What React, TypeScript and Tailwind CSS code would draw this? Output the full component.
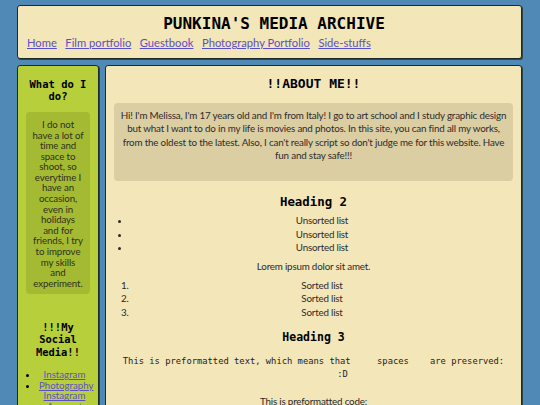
import React from "react";

const mono = "font-['DejaVu_Sans_Mono',monospace]";
const sans = "font-['Lato',sans-serif]";

const navLinks = [
  "Home",
  "Film portfolio",
  "Guestbook",
  "Photography Portfolio",
  "Side-stuffs",
];

const whatIDo = [
  "I do not",
  "have a lot of",
  "time and",
  "space to",
  "shoot, so",
  "everytime I",
  "have an",
  "occasion,",
  "even in",
  "holidays",
  "and for",
  "friends, I try",
  "to improve",
  "my skills",
  "and",
  "experiment.",
].join("\n");

function Header() {
  return (
    <header className="h-[54px] rounded-[3px] border border-[#1c2a2a] bg-[#f3e6b9] pl-[9px] pt-[8px] shadow-[1px_1px_0_#2f4444]">
      <h1 className={`${mono} text-center text-[16px] font-bold leading-[20px] text-black`}>
        PUNKINA'S MEDIA ARCHIVE
      </h1>
      <nav className={`${sans} mt-[2px] flex gap-[8.5px] text-[11.2px] leading-[14px]`}>
        {navLinks.map((l) => (
          <a key={l} href="#" className="text-[#5b4fc8] underline">
            {l}
          </a>
        ))}
      </nav>
    </header>
  );
}

function Sidebar() {
  return (
    <aside className="w-[82px] shrink-0 rounded-[3px] border border-[#1c2a2a] bg-[#b7cf3a] px-[8px] pt-[13px] pb-4 shadow-[1px_1px_0_#2f4444]">
      <h2 className={`${mono} text-center text-[10.5px] font-bold leading-[11.7px] text-black`}>
        What do I do?
      </h2>
      <p className={`${sans} mt-[9.5px] whitespace-pre-line rounded-[4px] bg-[#a4ba33] px-[4px] pt-[7px] pb-[6px] text-center text-[9.7px] leading-[10.6px] tracking-[-0.1px] text-[#2d321a]`}>
        {whatIDo}
      </p>
      <h2 className={`${mono} mt-[26.5px] text-center text-[10.4px] font-bold leading-[12.5px] text-black`}>
        !!!My Social Media!!
      </h2>
      <ul className={`${sans} mt-[10.5px] list-disc pl-[13px] text-center text-[9.7px] leading-[10.7px]`}>
        <li>
          <a href="#" className="text-[#5b4fc8] underline">Instagram</a>
        </li>
        <li>
          <a href="#" className="text-[#5b4fc8] underline">
            Photography Instagram Account
          </a>
        </li>
      </ul>
    </aside>
  );
}

function Main() {
  return (
    <main className={`${sans} flex-1 rounded-[3px] border border-[#1c2a2a] bg-[#f3e6b9] px-[8px] pt-[10px] pb-6 text-[#2b2b2b] shadow-[1px_1px_0_#2f4444]`}>
      <h2 className={`${mono} text-center text-[13px] font-bold leading-[16px] text-black`}>
        !!ABOUT ME!!
      </h2>
      <div className="mt-[11px] rounded-[4px] bg-[#dbcea3] px-[5px] pt-[6px] pb-[19px]">
        <p className="text-center text-[9.8px] leading-[13.3px] tracking-[-0.18px]">
          Hi! I'm Melissa, I'm 17 years old and I'm from Italy! I go to art
          school and I study graphic design but what I want to do in my life
          is movies and photos. In this site, you can find all my works, from
          the oldest to the latest. Also, I can't really script so don't judge
          me for this website. Have fun and stay safe!!!
        </p>
      </div>

      <h3 className={`${mono} mt-[12.5px] text-center text-[12.4px] font-bold leading-[15px] text-black`}>
        Heading 2
      </h3>
      <ul className="mt-[5.5px] list-disc pl-[17px] text-center text-[9.8px] leading-[13.5px] tracking-[-0.2px]">
        <li>Unsorted list</li>
        <li>Unsorted list</li>
        <li>Unsorted list</li>
      </ul>
      <p className="mt-[5px] text-center text-[9.8px] leading-[13.5px] tracking-[-0.2px]">
        Lorem ipsum dolor sit amet.
      </p>
      <ol className="mt-[6px] list-decimal pl-[17px] text-center text-[9.8px] leading-[13.2px] tracking-[-0.2px]">
        <li>Sorted list</li>
        <li>Sorted list</li>
        <li>Sorted list</li>
      </ol>

      <h4 className={`${mono} mt-[11.5px] text-center text-[11.5px] font-bold leading-[14px] text-black`}>
        Heading 3
      </h4>
      <pre className={`${mono} mt-[10.7px] whitespace-pre-wrap text-center text-[8.8px] leading-[13.3px] text-[#222]`}>
        {"This is preformatted text, which means that     spaces    are preserved:\n           :D"}
      </pre>
      <p className="mt-[13.3px] text-center text-[9.8px] leading-[13.3px] tracking-[-0.2px]">
        This is preformatted code:
      </p>
      <pre className={`${mono} mt-2 text-center text-[8.8px] leading-[13.3px] text-[#222]`}>
        <code>{"<p>Hello world!</p>"}</code>
      </pre>
    </main>
  );
}

export default function App() {
  return (
    <div className="min-h-screen bg-[#5089b5] pl-[17px] pr-[18px] pt-[5px]">
      <Header />
      <div className="mt-[6px] flex items-start gap-[6px]">
        <Sidebar />
        <Main />
      </div>
    </div>
  );
}
